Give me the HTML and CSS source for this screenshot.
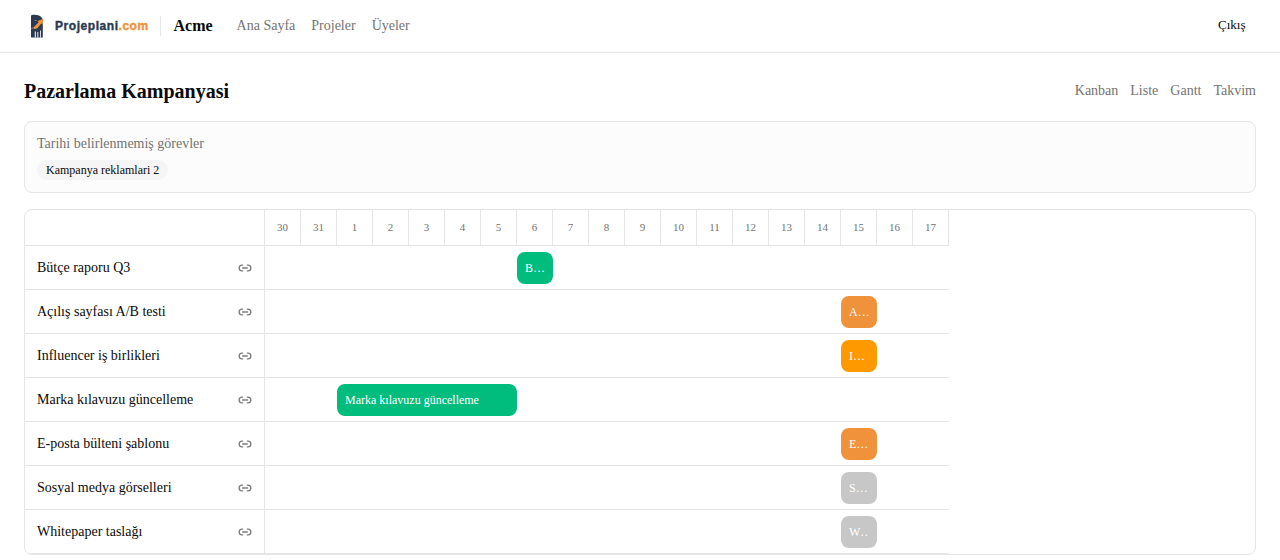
FILE: index.html
```
<!DOCTYPE html>
<html lang="tr">
<head>
<meta charset="utf-8">
<title>Pazarlama Kampanyasi</title>
<link rel="stylesheet" href="styles.css">
</head>
<body>
<svg width="0" height="0" class="defs">
  <symbol id="link" viewBox="0 0 24 24"><path d="M8 17H7A5 5 0 0 1 7 7h1M16 7h1a5 5 0 1 1 0 10h-1M8 12h8"/></symbol>
</svg>
<header class="topbar">
  <div class="brand">
    <svg class="mark" width="14" height="24" viewBox="0 0 14 24">
      <path fill="#2b3a50" d="M1 2.2Q1 .8 3 .8C8 .8 12 2 12.800 6V23.500H1z"/>
      <path fill="#fff" d="M4.800 17.500h1v6h-1zM7.400 18h.9v5.500h-.9zM10 16.500h.8v7h-.8zM1 14.500l1.500-1v1z"/>
      <path stroke="#fff" stroke-width=".4" d="M4.500 6.500h2"/>
      <path fill="#f0923c" d="M3.800 15L3.200 13.800 8.600 8.200 7.500 7l6-2.200L12.500 10.200l-1.200-.8-4.200 5z"/>
    </svg>
    <span class="wordmark">Projeplani<span class="tld">.com</span></span>
  </div>
  <span class="org">Acme</span>
  <nav class="nav"><a>Ana Sayfa</a><a>Projeler</a><a>Üyeler</a></nav>
  <a class="logout">Çıkış</a>
</header>
<main class="page">
  <div class="heading">
    <h1>Pazarlama Kampanyasi</h1>
    <nav class="views"><a>Kanban</a><a>Liste</a><a>Gantt</a><a>Takvim</a></nav>
  </div>
  <section class="undated">
    <p>Tarihi belirlenmemiş görevler</p>
    <span class="chip">Kampanya reklamlari 2</span>
  </section>
  <section class="gantt">
    <div class="row head">
      <div class="label"></div>
      <div class="day">30</div><div class="day">31</div><div class="day">1</div><div class="day">2</div><div class="day">3</div><div class="day">4</div><div class="day">5</div><div class="day">6</div><div class="day">7</div><div class="day">8</div><div class="day">9</div><div class="day">10</div><div class="day">11</div><div class="day">12</div><div class="day">13</div><div class="day">14</div><div class="day">15</div><div class="day">16</div><div class="day">17</div>
    </div>
    <div class="row"><div class="label">Bütçe raporu Q3<svg class="link"><use href="#link"/></svg></div><div class="track"><div class="bar done" style="grid-column:8">Bütçe raporu Q3</div></div></div>
    <div class="row"><div class="label">Açılış sayfası A/B testi<svg class="link"><use href="#link"/></svg></div><div class="track"><div class="bar active" style="grid-column:17">Açılış sayfası A/B testi</div></div></div>
    <div class="row"><div class="label">Influencer iş birlikleri<svg class="link"><use href="#link"/></svg></div><div class="track"><div class="bar review" style="grid-column:17">Influencer iş birlikleri</div></div></div>
    <div class="row"><div class="label">Marka kılavuzu güncelleme<svg class="link"><use href="#link"/></svg></div><div class="track"><div class="bar done" style="grid-column:3/8">Marka kılavuzu güncelleme</div></div></div>
    <div class="row"><div class="label">E-posta bülteni şablonu<svg class="link"><use href="#link"/></svg></div><div class="track"><div class="bar active" style="grid-column:17">E-posta bülteni şablonu</div></div></div>
    <div class="row"><div class="label">Sosyal medya görselleri<svg class="link"><use href="#link"/></svg></div><div class="track"><div class="bar todo" style="grid-column:17">Sosyal medya görselleri</div></div></div>
    <div class="row"><div class="label">Whitepaper taslağı<svg class="link"><use href="#link"/></svg></div><div class="track"><div class="bar todo" style="grid-column:17"><span class="clip">Whitepaper taslağı</span></div></div></div>
  </section>
</main>
</body>
</html>
```
FILE: styles.css
```
* { box-sizing: border-box; }
body { margin: 0; height: 560px; overflow: hidden; background: #fff; color: #0a0a0a; font: 14px/20px "Liberation Serif", serif; }
h1, p { margin: 0; }
.defs { display: block; }
.topbar { display: flex; align-items: center; height: 53px; padding: 0 34.5px 0 30px; border-bottom: 1px solid #e5e5e5; }
.brand { display: flex; align-items: center; height: 20px; width: 131px; border-right: 1px solid #e5e5e5; }
.mark { flex: none; margin-right: 11px; }
.wordmark { font: 700 12px/16px "Liberation Sans", sans-serif; color: #2b3a50; -webkit-text-stroke: .4px currentColor; letter-spacing: .55px; white-space: nowrap; }
.tld { color: #f0923c; }
.org { margin-left: 12.5px; font-size: 16px; font-weight: 700; }
.nav { display: flex; gap: 16px; margin-left: 24px; color: #737373; }
.logout { margin-left: auto; margin-bottom: 2px; font-size: 13px; }
.page { padding: 24px; }
.heading { display: flex; align-items: center; justify-content: space-between; height: 28px; margin-bottom: 16px; }
h1 { font-size: 20px; line-height: 28px; }
.views { display: flex; gap: 12px; color: #737373; }
.undated { height: 72px; padding: 12px; border: 1px solid #e5e5e5; border-radius: 8px; background: #fcfcfc; margin-bottom: 16px; }
.undated p { color: #737373; line-height: 20px; margin-bottom: 6px; }
.chip { display: block; width: max-content; padding: 2px 9px; border-radius: 10px; background: #f5f5f5; font-size: 12px; line-height: 16px; }
.gantt { border: 1px solid #e5e5e5; border-radius: 8px; overflow: hidden; }
.row { display: flex; width: 924px; height: 44px; border-bottom: 1px solid #e5e5e5; }
.head { height: 36px; }
.label { display: flex; flex: none; align-items: center; justify-content: space-between; width: 240px; padding: 0 12px; border-right: 1px solid #e5e5e5; }
.link { width: 14px; height: 14px; fill: none; stroke: #7c7c7c; stroke-width: 2.3; stroke-linecap: round; stroke-linejoin: round; }
.day { width: 36px; border-right: 1px solid #e5e5e5; color: #737373; font-size: 11px; line-height: 35px; text-align: center; }
.track { display: grid; grid-template-columns: repeat(19, 36px); align-items: center; padding-top: 1px; }
.bar { min-width: 0; height: 32px; padding: 0 8px; border-radius: 8px; overflow: hidden; color: #fff; font-size: 12px; line-height: 32px; white-space: nowrap; text-overflow: ellipsis; }
.clip { display: block; width: 19px; overflow: hidden; text-overflow: ellipsis; }
.done { background: #00bc7d; }
.active { background: #f0923c; }
.review { background: #fe9a00; }
.todo { background: #c7c7c7; }
```
